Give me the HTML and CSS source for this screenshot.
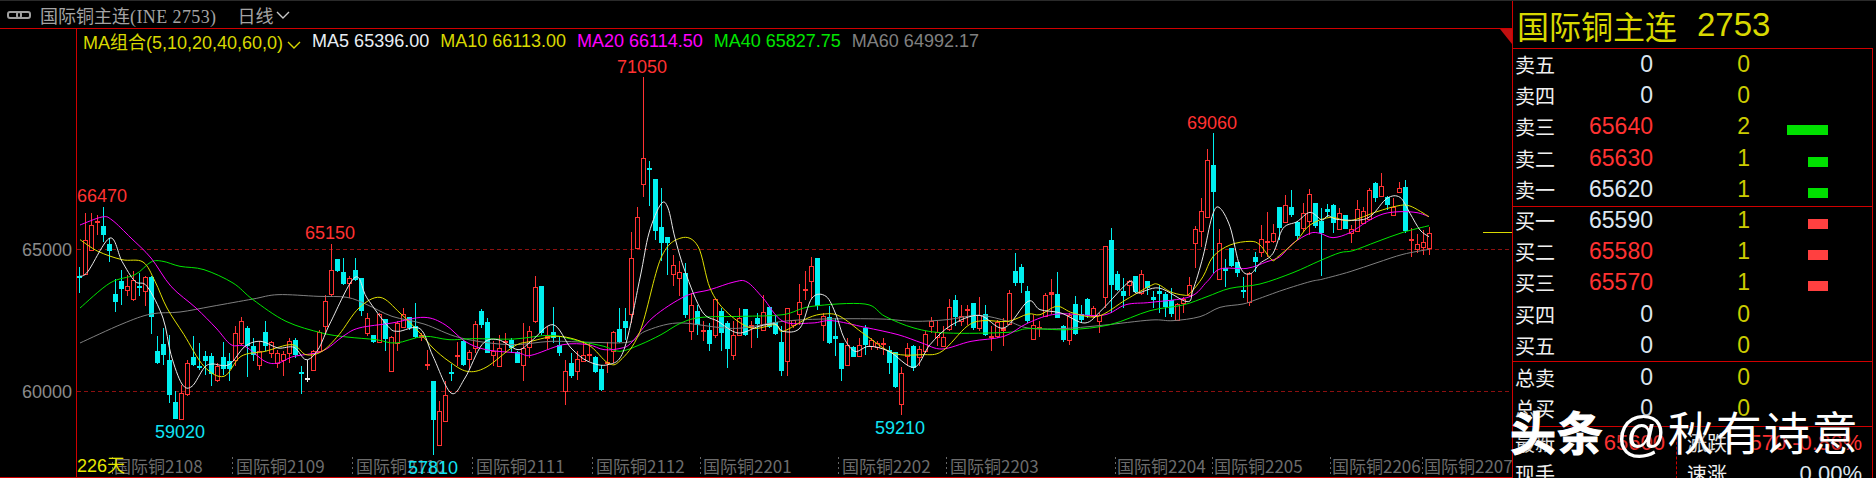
FILE: index.html
```html
<!DOCTYPE html>
<html lang="zh-CN">
<head>
    <meta charset="UTF-8">
    <title>国际铜主连 2753</title>
    <link rel="stylesheet" href="styles.css">
</head>
<body>
    <div class="app">
        <div class="main">
            <div class="toolbar">
                <svg class="link-icon" viewBox="0 0 24 8">
                    <rect x="1" y="1" width="13" height="6" rx="2"/>
                    <rect x="10" y="1" width="13" height="6" rx="2"/>
                </svg>
                <span class="symbol"><span class="symbol-name">国际铜主连</span>(INE 2753)</span>
                <span class="period">日线</span>
                <svg class="chevron" viewBox="0 0 14 8"><polyline points="1,1 7,7 13,1"/></svg>
            </div>

            <div class="chart-wrap">
                <svg id="chart" class="chart" viewBox="0 29 1512 449" width="1512" height="449">
                    <line class="grid" x1="77" y1="249.5" x2="1512" y2="249.5"/>
                    <line class="grid" x1="77" y1="391.5" x2="1512" y2="391.5"/>
                    <line class="frame" x1="76.5" y1="29" x2="76.5" y2="478"/>
                    <line class="frame" x1="0" y1="477.5" x2="1512" y2="477.5"/>
                    <line class="price-mark" x1="1483" y1="232.5" x2="1512" y2="232.5"/>

                    <g class="ticks">
                        <line x1="112.5" y1="457" x2="112.5" y2="477"/>
                        <line x1="232.5" y1="457" x2="232.5" y2="477"/>
                        <line x1="352.5" y1="457" x2="352.5" y2="477"/>
                        <line x1="472.5" y1="457" x2="472.5" y2="477"/>
                        <line x1="592.5" y1="457" x2="592.5" y2="477"/>
                        <line x1="700.5" y1="457" x2="700.5" y2="477"/>
                        <line x1="838.5" y1="457" x2="838.5" y2="477"/>
                        <line x1="946.5" y1="457" x2="946.5" y2="477"/>
                        <line x1="1115.5" y1="457" x2="1115.5" y2="477"/>
                        <line x1="1212.5" y1="457" x2="1212.5" y2="477"/>
                        <line x1="1330.5" y1="457" x2="1330.5" y2="477"/>
                        <line x1="1422.5" y1="457" x2="1422.5" y2="477"/>
                    </g>
                    <g class="months">
                        <text x="114" y="473">国际铜2108</text>
                        <text x="236" y="473">国际铜2109</text>
                        <text x="356" y="473">国际铜2110</text>
                        <text x="476" y="473">国际铜2111</text>
                        <text x="596" y="473">国际铜2112</text>
                        <text x="703" y="473">国际铜2201</text>
                        <text x="842" y="473">国际铜2202</text>
                        <text x="950" y="473">国际铜2203</text>
                        <text x="1117" y="473">国际铜2204</text>
                        <text x="1214" y="473">国际铜2205</text>
                        <text x="1332" y="473">国际铜2206</text>
                        <text x="1424" y="473">国际铜2207</text>
                    </g>

                    <g id="candles"></g>
                    <g id="ma-lines"></g>

                    <text class="axis-label" x="22" y="256">65000</text>
                    <text class="axis-label" x="22" y="398">60000</text>
                    <text class="days" x="77" y="472">226天</text>

                    <text class="peak" x="77" y="202">66470</text>
                    <text class="peak" x="305" y="239">65150</text>
                    <text class="peak" x="617" y="73">71050</text>
                    <text class="peak" x="1187" y="129">69060</text>
                    <text class="trough" x="155" y="438">59020</text>
                    <text class="trough" x="408" y="474">57810</text>
                    <text class="trough" x="875" y="434">59210</text>
                </svg>

                <div class="ma-legend">
                    <span class="ma-group">MA组合(5,10,20,40,60,0)<svg class="chevron chevron-small" viewBox="0 0 14 8"><polyline points="1,1 7,7 13,1"/></svg></span>
                    <span class="ma5">MA5 65396.00</span>
                    <span class="ma10">MA10 66113.00</span>
                    <span class="ma20">MA20 66114.50</span>
                    <span class="ma40">MA40 65827.75</span>
                    <span class="ma60">MA60 64992.17</span>
                </div>
                <div class="corner-flag"></div>
            </div>
        </div>

        <div class="panel">
            <div class="panel-title">
                <span>国际铜主连</span>
                <span class="panel-code">2753</span>
            </div>
            <div class="book">
                <div class="book-section sells">
                    <div class="book-row"><span class="label">卖五</span><span class="price">0</span><span class="vol">0</span><span class="bar-cell"></span></div>
                    <div class="book-row"><span class="label">卖四</span><span class="price">0</span><span class="vol">0</span><span class="bar-cell"></span></div>
                    <div class="book-row"><span class="label">卖三</span><span class="price up">65640</span><span class="vol">2</span><span class="bar-cell"><i class="bar bar-green bar-2"></i></span></div>
                    <div class="book-row"><span class="label">卖二</span><span class="price up">65630</span><span class="vol">1</span><span class="bar-cell"><i class="bar bar-green bar-1"></i></span></div>
                    <div class="book-row"><span class="label">卖一</span><span class="price">65620</span><span class="vol">1</span><span class="bar-cell"><i class="bar bar-green bar-1"></i></span></div>
                </div>
                <div class="book-section buys">
                    <div class="book-row"><span class="label">买一</span><span class="price">65590</span><span class="vol">1</span><span class="bar-cell"><i class="bar bar-red bar-1"></i></span></div>
                    <div class="book-row"><span class="label">买二</span><span class="price up">65580</span><span class="vol">1</span><span class="bar-cell"><i class="bar bar-red bar-1"></i></span></div>
                    <div class="book-row"><span class="label">买三</span><span class="price up">65570</span><span class="vol">1</span><span class="bar-cell"><i class="bar bar-red bar-1"></i></span></div>
                    <div class="book-row"><span class="label">买四</span><span class="price">0</span><span class="vol">0</span><span class="bar-cell"></span></div>
                    <div class="book-row"><span class="label">买五</span><span class="price">0</span><span class="vol">0</span><span class="bar-cell"></span></div>
                </div>
                <div class="book-section totals">
                    <div class="book-row"><span class="label">总卖</span><span class="price">0</span><span class="vol">0</span><span class="bar-cell"></span></div>
                    <div class="book-row"><span class="label">总买</span><span class="price">0</span><span class="vol">0</span><span class="bar-cell"></span></div>
                </div>
                <div class="quote">
                    <div class="quote-col quote-left">
                        <div class="quote-row"><span class="label">最新</span><span class="value up">65600</span></div>
                        <div class="quote-row"><span class="label">现手</span><span class="value hand">-----</span></div>
                    </div>
                    <div class="quote-col quote-right">
                        <div class="quote-row"><span class="label">涨跌</span><span class="value up">-570 -0.86%</span></div>
                        <div class="quote-row"><span class="label">速涨</span><span class="value">0.00%</span></div>
                    </div>
                </div>
            </div>
            <div class="watermark"><b>头条</b><span class="wm-at">@</span><span class="wm-name">秋有诗意</span></div>
        </div>
    </div>

    <script src="chart.js"></script>
</body>
</html>
```

FILE: styles.css
```css
* {
    margin: 0;
    padding: 0;
    box-sizing: border-box;
}

body {
    width: 1876px;
    height: 478px;
    overflow: hidden;
    background-color: #000;
    font-family: "Liberation Sans", "Noto Sans CJK SC", sans-serif;
}

.app {
    display: flex;
    height: 478px;
    border-top: 1px solid #2a2a2a;
}

.main {
    width: 1512px;
    display: flex;
    flex-direction: column;
}

/* top bar */
.toolbar {
    height: 28px;
    flex-shrink: 0;
    display: flex;
    align-items: center;
    padding-left: 7px;
    border-bottom: 1px solid #d00000;
    color: #a4a4a4;
    font-size: 18px;
}

.link-icon {
    width: 24px;
    height: 8px;
    margin-right: 9px;
    fill: none;
    stroke: #a0a0a0;
    stroke-width: 2;
}

.symbol {
    font-family: "Liberation Serif", "Noto Sans CJK SC", serif;
    letter-spacing: .4px;
}

.symbol-name {
    font-family: "Noto Sans CJK SC", sans-serif;
    letter-spacing: 0;
}

.period {
    margin-left: 21px;
    font-family: "Noto Sans CJK SC", sans-serif;
}

.chevron {
    width: 14px;
    height: 8px;
    margin-left: 3px;
    fill: none;
    stroke: #c8c8c8;
    stroke-width: 1.4;
}

.chevron-small {
    stroke: #d8d800;
    margin-left: 4px;
}

/* chart */
.chart-wrap {
    position: relative;
    flex: 1;
}

.chart {
    display: block;
    font-size: 18px;
}

.grid {
    stroke: #8c1010;
    stroke-dasharray: 4 3;
}

.frame {
    stroke: #d00000;
}

.price-mark {
    stroke: #d8d800;
}

.ticks line {
    stroke: #666;
    stroke-dasharray: 2 3;
}

.months text {
    fill: #6c6c6c;
    font-size: 17px;
    font-family: "Noto Sans CJK SC", sans-serif;
}

.axis-label {
    fill: #8a8a8a;
}

.days {
    fill: #e6e600;
    font-family: "Liberation Sans", "Noto Sans CJK SC", sans-serif;
}

.peak {
    fill: #ff3232;
}

.trough {
    fill: #10e4f4;
}

.ma-legend {
    position: absolute;
    left: 83px;
    top: 1px;
    height: 22px;
    display: flex;
    align-items: center;
    gap: 11px;
    font-size: 18px;
    white-space: nowrap;
}

.ma-group {
    color: #d8d800;
}

.ma5 {
    color: #e8eef4;
}

.ma10 {
    color: #d8d800;
}

.ma20 {
    color: #ff00ff;
}

.ma40 {
    color: #00e600;
}

.ma60 {
    color: #808080;
}

.corner-flag {
    position: absolute;
    right: 0;
    top: 0;
    border-top: 15px solid #c01010;
    border-left: 12px solid transparent;
}

/* right panel */
.panel {
    position: relative;
    width: 364px;
    border-left: 1px solid #d00000;
    color: #f0f0f0;
    font-size: 20px;
}

.panel-title {
    height: 47px;
    padding-left: 4px;
    display: flex;
    align-items: center;
    gap: 20px;
    color: #d8d800;
    font-size: 32px;
}

.panel-code {
    font-size: 33px;
}

.book {
    width: 360px;
    border-top: 1px solid #d00000;
    border-right: 1px solid #d00000;
    height: 430px;
}

.book-section {
    border-bottom: 1px solid #d00000;
}

.sells {
    height: 158px;
}

.buys {
    height: 157px;
    margin-top: -2px;
}

.totals {
    height: 65px;
}

.book-row {
    display: grid;
    grid-template-columns: 44px 94px 97px 78px;
    align-items: center;
    height: 31.2px;
    padding-left: 2px;
}

.price {
    text-align: right;
    font-size: 23px;
    color: #dce6f0;
}

.price.up,
.value.up {
    color: #ff3232;
}

.vol {
    text-align: right;
    font-size: 23px;
    color: #cccc00;
}

.bar-cell {
    display: flex;
    justify-content: flex-end;
}

.bar {
    display: block;
    height: 10px;
    margin-top: 7px;
}

.bar-1 {
    width: 20px;
}

.bar-2 {
    width: 41px;
}

.bar-green {
    background-color: #00e000;
}

.bar-red {
    background-color: #ff4040;
}

.quote {
    display: flex;
}

.quote-col {
    flex-shrink: 0;
}

.quote-left {
    width: 164px;
    padding: 0 11px 0 2px;
    border-right: 1px dashed #d00000;
}

.quote-right {
    width: 195px;
    padding: 0 10px;
}

.quote-row {
    display: flex;
    justify-content: space-between;
    align-items: center;
    height: 31px;
    white-space: nowrap;
}

.value {
    font-size: 22px;
    color: #dce6f0;
}

.value.hand {
    color: #e6e600;
    font-weight: 700;
    padding-top: 10px;
}

.watermark {
    position: absolute;
    left: -3px;
    top: 403px;
    display: flex;
    align-items: center;
    color: #fff;
    font-size: 46px;
    line-height: 60px;
    white-space: nowrap;
    text-shadow: 0 0 4px rgba(0, 0, 0, .6);
}

.watermark b {
    letter-spacing: 1px;
    -webkit-text-stroke: 1px #fff;
}

.wm-at {
    margin-left: 12px;
    margin-right: 1px;
    font-size: 50px;
}

.wm-name {
    letter-spacing: 2px;
}
```

FILE: chart.js
```js
// y values below are offsets from row 238 in thirds of a pixel
const BASE_Y = 238;
const toY = z => BASE_Y + z / 3;

// kind (0 cyan, 1 red, 2 white), high, body top, body bottom, low
const candles = [
    [0,86,113,120,164],[1,-76,6,108,111],[1,-76,-39,36,40],[1,-69,-52,-47,-9],[0,-92,-36,-9,12],
    [0,1,18,38,71],[0,122,168,192,222],[0,95,128,152,200],[1,110,145,155,175],[1,100,125,182,190],
    [0,105,143,150,175],[1,115,118,160,205],[0,115,118,238,288],[0,295,340,375,378],[0,270,318,350,380],
    [0,290,365,470,495],[0,460,492,542,542],[1,440,465,542,545],[1,365,375,467,475],[0,295,358,382,385],
    [0,315,383,388,395],[0,340,355,370,410],[0,345,353,407,443],[1,375,383,425,432],[0,313,358,392,410],
    [0,345,370,392,430],[1,265,285,365,385],[1,238,250,315,320],[0,265,270,325,418],[0,300,325,350,370],
    [1,310,340,380,395],[0,250,283,325,340],[1,310,313,345,360],[1,335,345,375,390],[1,340,348,365,415],
    [1,300,308,345,375],[0,300,306,352,360],[0,385,402,407,468],[2,365,421,424,432],[1,335,338,397,400],
    [1,275,282,340,345],[1,170,190,265,290],[1,18,95,167,178],[0,63,63,98,102],[0,60,103,138,140],
    [1,115,120,135,180],[0,60,95,125,130],[0,120,120,220,235],[1,225,240,285,295],[0,290,292,313,315],
    [1,225,228,313,315],[0,243,243,303,338],[1,295,298,400,400],[1,250,255,315,340],[1,210,228,268,270],
    [0,238,238,270,275],[0,195,265,297,300],[1,285,290,300,310],[1,335,378,383,395],[0,430,430,545,650],
    [1,490,520,620,620],[1,430,472,550,550],[0,378,403,407,430],[1,312,352,358,385],[0,305,310,382,385],
    [1,335,343,362,395],[1,250,258,330,345],[0,213,220,260,270],[0,240,253,345,345],[1,310,340,350,385],
    [1,290,330,383,385],[1,285,310,316,345],[0,300,305,330,345],[0,340,342,375,375],[1,255,330,382,430],
    [1,265,278,328,360],[1,115,148,250,255],[0,143,143,285,290],[1,265,293,302,332],[0,208,283,300,315],
    [0,295,320,345,355],[1,365,398,460,502],[0,345,375,415,420],[1,340,362,398,425],[1,308,350,368,372],
    [1,315,347,354,370],[0,355,358,402,405],[0,380,393,456,458],[1,313,372,378,405],[1,278,283,340,375],
    [0,210,273,312,315],[0,210,248,270,305],[1,-18,60,228,255],[1,-93,-63,30,30],[1,-483,-240,-162,-123],
    [0,-231,-210,-205,-96],[0,-177,-177,-21,6],[0,-150,-33,15,70],[0,-3,-3,15,110],[1,50,82,107,145],
    [1,70,103,120,175],[0,75,105,232,240],[1,165,200,280,305],[0,200,218,260,290],[1,250,277,283,310],
    [0,255,275,318,338],[1,180,183,292,300],[0,210,218,285,340],[0,250,255,332,390],[1,250,292,350,365],
    [1,210,240,290,295],[0,213,213,290,295],[1,250,262,270,330],[0,225,240,258,300],[1,170,222,275,280],
    [0,205,207,268,270],[0,230,252,287,290],[0,265,313,398,415],[1,210,210,368,415],[1,245,247,262,270],
    [1,138,192,227,260],[1,100,153,158,185],[1,58,85,128,180],[0,60,60,205,215],[1,225,235,260,310],
    [0,205,238,315,318],[0,240,293,302,355],[0,315,315,392,430],[1,300,320,382,385],[0,325,327,357,358],
    [1,300,322,355,355],[0,262,270,320,350],[1,300,305,325,335],[1,310,315,328,335],[1,300,315,322,350],
    [0,325,335,375,408],[0,343,343,447,450],[1,388,405,497,530],[1,315,330,355,385],[0,320,325,390,400],
    [1,325,333,358,385],[1,280,288,338,345],[1,238,250,265,285],[1,250,283,298,325],[1,265,297,323,325],
    [1,183,208,272,280],[0,170,185,237,265],[1,200,235,250,265],[1,200,213,220,260],[0,195,195,270,275],
    [1,178,230,270,280],[0,200,228,290,295],[1,265,293,297,338],[1,245,252,295,300],[1,240,270,280,325],
    [1,155,165,258,262],[0,45,98,135,145],[0,78,87,135,165],[0,145,160,250,255],[1,232,262,302,305],
    [1,250,268,270,298],[1,165,172,235,238],[1,122,163,170,228],[0,103,168,240,240],[0,260,265,307,312],
    [1,225,232,305,320],[0,175,198,288,292],[0,200,228,245,255],[0,180,183,230,240],[1,205,210,235,240],
    [1,225,232,248,285],[1,25,25,177,210],[0,-30,5,140,225],[0,100,107,155,160],[0,120,160,175,210],
    [1,125,130,140,175],[0,115,115,162,165],[1,95,108,165,170],[0,128,130,150,170],[0,159,176,186,211],
    [0,141,159,168,226],[0,161,169,208,236],[0,151,186,228,236],[1,196,198,246,246],[1,176,183,196,224],
    [1,118,142,172,176],[1,-36,-26,16,91],[1,-119,-81,-22,26],[1,-266,-233,-64,-62],[0,-316,-219,-139,106],
    [1,-26,16,123,123],[0,64,91,98,146],[0,31,31,83,86],[0,73,73,106,116],[0,116,156,161,181],
    [1,101,104,191,203],[0,41,58,71,101],[1,-39,4,41,56],[1,-77,10,14,56],[1,-41,-14,8,16],
    [0,-92,-92,-29,6],[1,-129,-98,-49,-46],[0,-144,-92,-69,-62],[0,-52,-49,-7,6],[1,-104,-74,-30,-19],
    [1,-147,-131,-52,-9],[0,-104,-104,-36,-29],[0,-89,-52,-16,113],[0,-102,-87,-79,-64],[0,-102,-99,-46,-14],
    [1,-89,-74,-28,-26],[0,-69,-68,-28,-26],[1,-39,-26,-16,14],[1,-114,-86,-20,-19],[1,-94,-82,-44,-42],
    [1,-151,-144,-56,-54],[0,-169,-164,-119,-109],[1,-194,-156,-126,-124],[0,-126,-124,-99,-84],[1,-119,-94,-69,-67],
    [1,-169,-149,-137,-134],[0,-174,-152,-22,-14],[1,-29,4,10,58],[1,-12,19,33,44],[1,-24,13,26,51],
    [1,-32,-16,29,51]
];

// moving averages, sampled as [x, z]
const maLines = [
    { color: '#808080', points: [[80,315],[122,258],[151,228],[180,222],[212,205],[253,183],[278,170],[318,175],[347,178],[367,200],[392,235],[424,258],[461,300],[510,320],[551,310],[592,313],[629,312],[645,280],[677,255],[718,268],[742,270],[783,250],[824,243],[881,243],[914,250],[947,245],[979,232],[1008,250],[1028,270],[1061,272],[1102,262],[1151,246],[1173,248],[1200,236],[1220,208],[1243,198],[1257,184],[1283,156],[1310,131],[1323,123],[1350,101],[1377,74],[1403,49],[1429,34]] },
    { color: '#00e600', points: [[80,210],[110,135],[135,110],[151,72],[163,70],[180,85],[204,95],[233,135],[253,185],[286,250],[322,285],[347,297],[376,305],[396,315],[424,295],[449,305],[473,302],[514,303],[551,292],[580,310],[604,325],[620,340],[640,320],[661,290],[681,255],[702,238],[742,235],[783,230],[812,205],[865,198],[885,235],[914,270],[947,285],[1008,283],[1028,272],[1069,275],[1110,260],[1150,218],[1183,201],[1207,176],[1230,151],[1260,138],[1293,104],[1320,68],[1340,44],[1353,38],[1377,11],[1403,-17],[1429,-37]] },
    { color: '#ff00ff', points: [[80,-39],[102,-63],[112,-54],[131,0],[151,60],[171,145],[196,210],[216,270],[231,320],[245,325],[265,370],[278,375],[294,355],[322,340],[343,295],[359,270],[392,255],[424,238],[445,260],[465,310],[486,335],[518,345],[531,352],[563,320],[588,320],[604,335],[622,330],[632,312],[653,238],[685,175],[710,155],[734,132],[747,132],[763,180],[783,250],[812,255],[832,248],[865,268],[898,290],[922,315],[942,333],[971,310],[1004,295],[1028,255],[1057,228],[1102,232],[1126,200],[1151,193],[1190,176],[1207,131],[1220,93],[1247,91],[1267,71],[1280,56],[1293,16],[1310,-14],[1320,-14],[1333,-1],[1350,-16],[1367,-49],[1383,-72],[1400,-79],[1417,-76],[1429,-64]] },
    { color: '#e0e000', points: [[80,5],[98,40],[122,65],[143,72],[155,130],[167,210],[184,290],[204,385],[224,415],[241,355],[265,340],[292,320],[306,350],[322,340],[339,290],[359,210],[380,178],[400,225],[420,285],[433,330],[449,370],[467,400],[486,388],[514,325],[531,310],[559,295],[588,320],[608,375],[620,368],[640,280],[661,60],[681,0],[698,25],[710,150],[726,220],[751,270],[775,260],[783,280],[808,240],[824,228],[840,235],[865,290],[893,345],[922,350],[942,340],[967,265],[983,248],[1008,250],[1028,228],[1040,230],[1057,205],[1073,225],[1098,235],[1126,185],[1150,144],[1158,139],[1170,161],[1183,171],[1190,166],[1203,116],[1213,56],[1230,21],[1250,10],[1260,21],[1272,66],[1278,56],[1297,6],[1310,-39],[1330,-62],[1350,-52],[1377,-79],[1397,-96],[1410,-96],[1429,-64]] },
    { color: '#e8e8e8', points: [[80,115],[88,100],[110,0],[122,70],[135,130],[147,145],[163,240],[171,350],[182,438],[192,445],[204,390],[212,378],[229,380],[245,325],[261,310],[278,330],[294,328],[306,365],[318,335],[331,250],[355,118],[367,180],[388,265],[398,280],[420,272],[433,355],[451,465],[465,420],[482,320],[498,305],[518,335],[531,310],[553,260],[571,330],[588,370],[608,380],[624,335],[640,120],[649,-15],[661,-102],[668,-90],[675,0],[685,100],[702,220],[718,250],[738,285],[759,265],[775,258],[783,280],[800,270],[812,180],[826,175],[836,230],[844,300],[855,340],[869,325],[889,340],[914,388],[930,320],[951,262],[979,232],[1004,270],[1028,190],[1040,215],[1061,225],[1085,255],[1102,215],[1130,130],[1136,165],[1159,150],[1187,191],[1193,156],[1203,56],[1212,-64],[1219,-92],[1230,-34],[1240,86],[1250,108],[1260,76],[1273,46],[1283,-29],[1297,-49],[1310,-77],[1322,-54],[1328,-67],[1337,-56],[1360,-54],[1372,-69],[1387,-119],[1400,-122],[1410,-74],[1420,-24],[1429,-4]] }
];

const COLORS = ['#00f0f0', '#ff3232', '#e8e8e8'];
const NS = 'http://www.w3.org/2000/svg';

function addEl(parent, name, attrs) {
    const el = document.createElementNS(NS, name);
    Object.keys(attrs).forEach(key => el.setAttribute(key, attrs[key]));
    parent.appendChild(el);
}

const candleGroup = document.getElementById('candles');

candles.forEach((c, i) => {
    const x = 79.5 + i * 6;
    const color = COLORS[c[0]];
    const top = Math.round(toY(c[2]));
    const bottom = Math.round(toY(c[3]));

    addEl(candleGroup, 'line', { x1: x, x2: x, y1: Math.round(toY(c[1])), y2: Math.round(toY(c[4])), stroke: color });

    if (c[0] === 1 && bottom - top > 3) {
        // red candles are hollow
        addEl(candleGroup, 'rect', { x: x - 2, y: top + 0.5, width: 4, height: bottom - top, fill: '#000', stroke: color });
    } else {
        addEl(candleGroup, 'rect', { x: x - 2.5, y: top, width: 5, height: Math.max(bottom - top, 2), fill: color });
    }
});

// smooth the sampled points the way the terminal's curves look
function smoothPath(points) {
    const pts = points.map(p => [p[0], toY(p[1])]);
    let d = 'M' + pts[0].join(' ');
    for (let i = 0; i < pts.length - 1; i++) {
        const p0 = pts[Math.max(i - 1, 0)];
        const p1 = pts[i];
        const p2 = pts[i + 1];
        const p3 = pts[Math.min(i + 2, pts.length - 1)];
        d += ' C' + (p1[0] + (p2[0] - p0[0]) / 6) + ' ' + (p1[1] + (p2[1] - p0[1]) / 6) +
            ' ' + (p2[0] - (p3[0] - p1[0]) / 6) + ' ' + (p2[1] - (p3[1] - p1[1]) / 6) +
            ' ' + p2[0] + ' ' + p2[1];
    }
    return d;
}

const lineGroup = document.getElementById('ma-lines');

maLines.forEach(line => {
    addEl(lineGroup, 'path', { d: smoothPath(line.points), fill: 'none', stroke: line.color, 'stroke-width': 1 });
});
```
